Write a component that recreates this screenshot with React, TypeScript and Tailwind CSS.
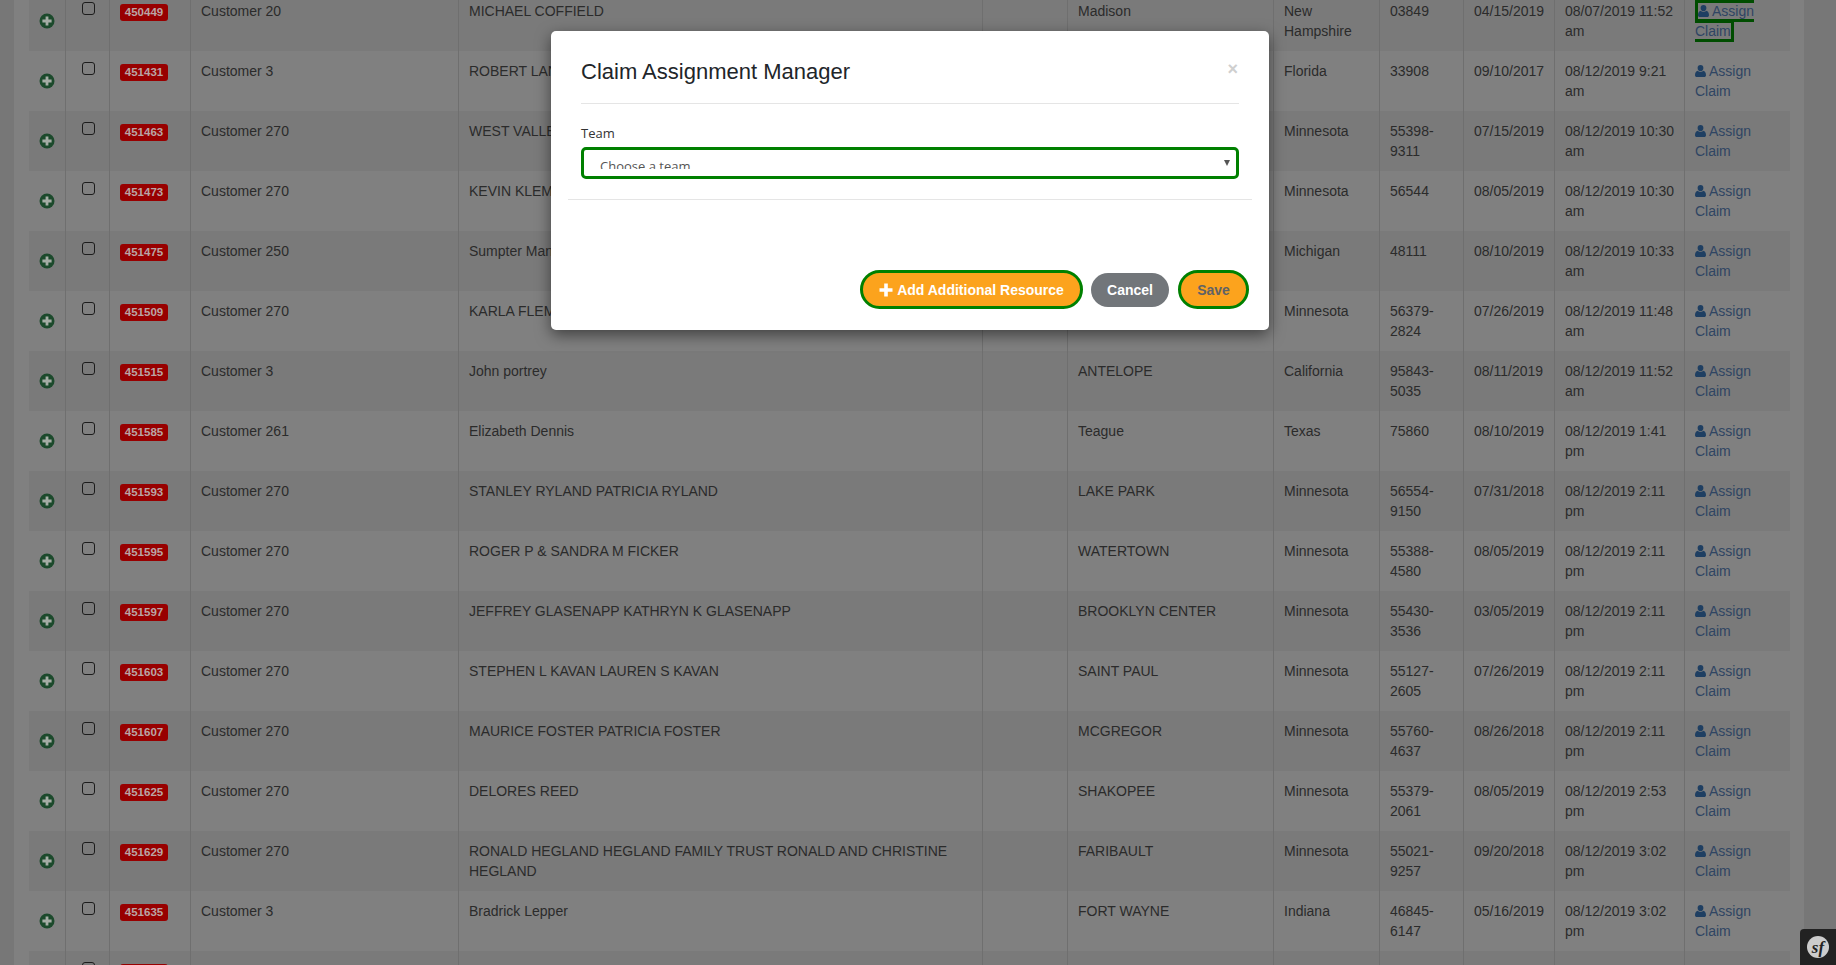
import React from "react";

const rows = [
  ["450449", "Customer 20", "MICHAEL COFFIELD", "Madison", "New Hampshire", "03849", "04/15/2019", "08/07/2019 11:52 am"],
  ["451431", "Customer 3", "ROBERT LANE", "FORT MYERS", "Florida", "33908", "09/10/2017", "08/12/2019 9:21 am"],
  ["451463", "Customer 270", "WEST VALLEY", "CHANHASSEN", "Minnesota", "55398-9311", "07/15/2019", "08/12/2019 10:30 am"],
  ["451473", "Customer 270", "KEVIN KLEMM", "ALBERTVILLE", "Minnesota", "56544", "08/05/2019", "08/12/2019 10:30 am"],
  ["451475", "Customer 250", "Sumpter Manor", "Belleville", "Michigan", "48111", "08/10/2019", "08/12/2019 10:33 am"],
  ["451509", "Customer 270", "KARLA FLEMING", "MONTICELLO", "Minnesota", "56379-2824", "07/26/2019", "08/12/2019 11:48 am"],
  ["451515", "Customer 3", "John portrey", "ANTELOPE", "California", "95843-5035", "08/11/2019", "08/12/2019 11:52 am"],
  ["451585", "Customer 261", "Elizabeth Dennis", "Teague", "Texas", "75860", "08/10/2019", "08/12/2019 1:41 pm"],
  ["451593", "Customer 270", "STANLEY RYLAND PATRICIA RYLAND", "LAKE PARK", "Minnesota", "56554-9150", "07/31/2018", "08/12/2019 2:11 pm"],
  ["451595", "Customer 270", "ROGER P & SANDRA M FICKER", "WATERTOWN", "Minnesota", "55388-4580", "08/05/2019", "08/12/2019 2:11 pm"],
  ["451597", "Customer 270", "JEFFREY GLASENAPP KATHRYN K GLASENAPP", "BROOKLYN CENTER", "Minnesota", "55430-3536", "03/05/2019", "08/12/2019 2:11 pm"],
  ["451603", "Customer 270", "STEPHEN L KAVAN LAUREN S KAVAN", "SAINT PAUL", "Minnesota", "55127-2605", "07/26/2019", "08/12/2019 2:11 pm"],
  ["451607", "Customer 270", "MAURICE FOSTER PATRICIA FOSTER", "MCGREGOR", "Minnesota", "55760-4637", "08/26/2018", "08/12/2019 2:11 pm"],
  ["451625", "Customer 270", "DELORES REED", "SHAKOPEE", "Minnesota", "55379-2061", "08/05/2019", "08/12/2019 2:53 pm"],
  ["451629", "Customer 270", "RONALD HEGLAND HEGLAND FAMILY TRUST RONALD AND CHRISTINE HEGLAND", "FARIBAULT", "Minnesota", "55021-9257", "09/20/2018", "08/12/2019 3:02 pm"],
  ["451635", "Customer 3", "Bradrick Lepper", "FORT WAYNE", "Indiana", "46845-6147", "05/16/2019", "08/12/2019 3:02 pm"],
  ["451641", "", "", "", "", "", "", ""],
];

const cell = "border-l border-[#6f6f6f] pl-[10px] pr-[5px] pt-[10px] pb-0 align-top";

function PlusCircle() {
  return (
    <svg width="16" height="16" viewBox="0 0 16 16" className="block mx-auto">
      <circle cx="8" cy="8" r="7.5" fill="#1c4a2c" />
      <path d="M6.6 3.4h2.8v3.2h3.2v2.8H9.4v3.2H6.6V9.4H3.4V6.6h3.2z" fill="#a5aca5" />
    </svg>
  );
}

function UserIcon() {
  return (
    <svg width="11" height="12" viewBox="0 0 11 12" className="mr-[3px] inline-block align-[-1px]">
      <ellipse cx="5.5" cy="3.1" rx="2.9" ry="3.1" fill="#1f3f62" />
      <path d="M0 10.2C0 7.8 1 6 2.7 5.7 3.4 6.4 4.4 6.9 5.5 6.9s2.1-.5 2.8-1.2C10 6 11 7.8 11 10.2 11 11.3 10.2 12 9.2 12H1.8C.8 12 0 11.3 0 10.2z" fill="#1f3f62" />
    </svg>
  );
}

function App() {
  return (
    <div className="relative h-[965px] w-full overflow-hidden bg-[#777777] font-['Liberation_Sans',Arial,sans-serif] text-[14px] leading-[20px] text-[#2b2b2b]">
      <div className="mr-[32px] ml-[14px] bg-[#808080] pl-[15px] pr-[14px]">
        <table className="-mt-[9px] w-[1761px] table-fixed border-separate border-spacing-0">
          <colgroup>
            <col className="w-[36px]" />
            <col className="w-[44px]" />
            <col className="w-[81px]" />
            <col className="w-[268px]" />
            <col className="w-[524px]" />
            <col className="w-[85px]" />
            <col className="w-[206px]" />
            <col className="w-[106px]" />
            <col className="w-[84px]" />
            <col className="w-[91px]" />
            <col className="w-[130px]" />
            <col className="w-[106px]" />
          </colgroup>
          <tbody>
            {rows.map((r, i) => (
              <tr key={r[0]} className={i % 2 === 0 ? "h-[60px] bg-[#7a7a7a]" : "h-[60px] bg-[#808080]"}>
                <td className="p-0 align-middle">
                  <PlusCircle />
                </td>
                <td className="border-l border-[#6f6f6f] pl-[16px] pt-[11px] align-top">
                  <div className="h-[13px] w-[13px] rounded-[3px] border border-[#1c1c1c]" />
                </td>
                <td className="border-l border-[#6f6f6f] pl-[10px] pt-[13px] align-top">
                  <span className="block h-[17px] w-[48px] rounded-[3px] bg-[#980000] text-center text-[11.5px] font-bold leading-[17px] text-[#b9a5a5]">
                    {r[0]}
                  </span>
                </td>
                <td className={cell}>{r[1]}</td>
                <td className={cell}>{r[2]}</td>
                <td className={cell}></td>
                <td className={cell}>{r[3]}</td>
                <td className={cell}>{r[4]}</td>
                <td className={cell}>{r[5]}</td>
                <td className={cell}>{r[6]}</td>
                <td className={cell}>{r[7]}</td>
                <td className={cell}>
                  {r[1] && (
                    <a className={i === 0 ? "border-[3px] border-[#004d00] text-[#2f4563]" : "text-[#2f4563]"}>
                      <UserIcon />
                      Assign Claim
                    </a>
                  )}
                </td>
              </tr>
            ))}
          </tbody>
        </table>
      </div>

      <div className="absolute bottom-0 right-0 flex h-[36px] w-[36px] items-center justify-center rounded-tl-[4px] bg-[#222222]">
        <span className="flex h-[22px] w-[22px] items-center justify-center rounded-full bg-[#cccccc] font-['Liberation_Serif',serif] text-[17px] font-bold italic leading-none text-[#222222]">
          sf
        </span>
      </div>

      <div className="absolute left-[551px] top-[31px] h-[299px] w-[718px] rounded-[5px] bg-white shadow-[0_5px_15px_rgba(0,0,0,0.5)]">
        <div className="mx-[30px] flex h-[73px] items-start justify-between border-b border-[#e5e5e5] pt-[26px]">
          <h4 className="text-[22px] font-normal leading-[30px] text-[#212529]">Claim Assignment Manager</h4>
          <span className="mr-[1px] mt-[3px] text-[18px] font-bold leading-[18px] text-[#cfcfcf]">×</span>
        </div>
        <div className="mx-[17px] h-[96px] border-b border-[#e5e5e5] px-[13px] pt-[20px]">
          <div className="font-['Open_Sans',sans-serif] text-[13px] leading-[18px] text-[#333333]">Team</div>
          <div className="relative mt-[5px] h-[32px] rounded-[5px] border-[3px] border-[#008000] bg-white">
            <div className="h-[19px] overflow-hidden pl-[16px] pt-[7px] font-['Open_Sans',sans-serif] text-[13px] leading-[18px] text-[#555555]">
              Choose a team
            </div>
            <div className="absolute right-[6px] top-[10px] h-0 w-0 border-x-[3px] border-t-[6px] border-x-transparent border-t-[#555555]" />
          </div>
        </div>
        <div className="mr-[20px] mt-[70px] flex items-center justify-end gap-[8px] text-[14px] font-bold">
          <button className="flex h-[39px] w-[223px] items-center justify-center gap-[4px] rounded-full border-[3px] border-[#008000] bg-[#fca31d] text-white">
            <svg width="14" height="14" viewBox="0 0 14 14">
              <path d="M5.2 0.5h3.6v4.7h4.7v3.6H8.8v4.7H5.2V8.8H0.5V5.2h4.7z" fill="#ffffff" />
            </svg>
            Add Additional Resource
          </button>
          <button className="h-[34px] w-[78px] rounded-full bg-[#72767a] text-white">Cancel</button>
          <button className="ml-[1px] h-[39px] w-[71px] rounded-full border-[3px] border-[#008000] bg-[#fca31d] text-[#5f6266]">Save</button>
        </div>
      </div>
    </div>
  );
}

export default App;
